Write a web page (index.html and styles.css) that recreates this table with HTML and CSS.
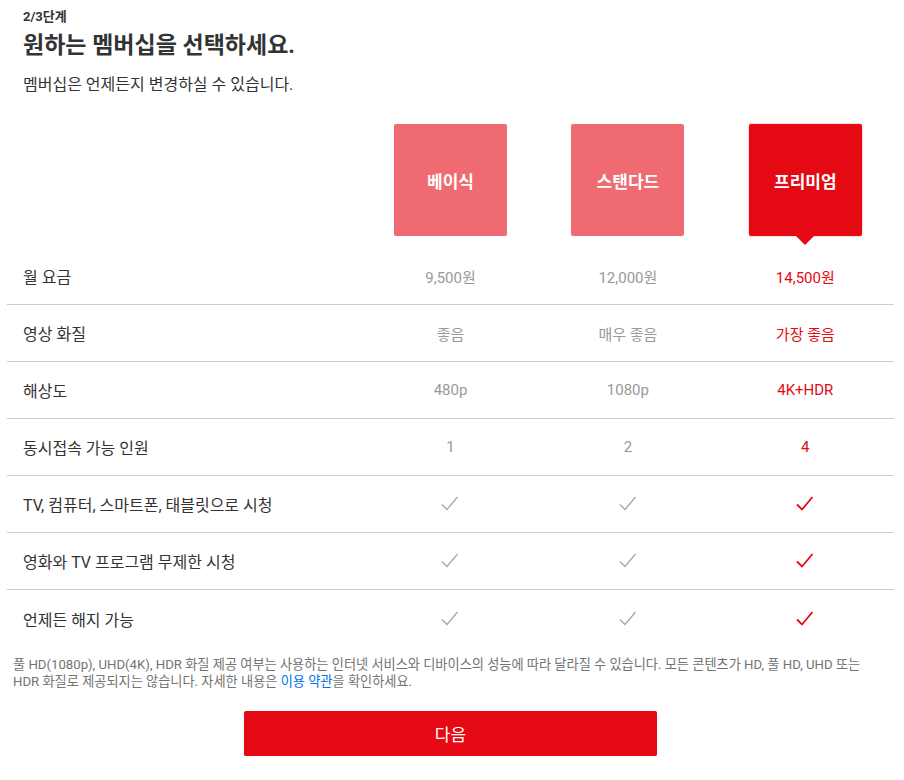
FILE: index.html
```html
<!DOCTYPE html>
<html lang="ko">
<head>
<meta charset="utf-8">
<title>멤버십 선택</title>
<link rel="stylesheet" href="styles.css">
</head>
<body>
<div class="page">
  <header class="intro">
    <div class="step">2/3단계</div>
    <h1 class="title">원하는 멤버십을 선택하세요.</h1>
    <p class="subtitle">멤버십은 언제든지 변경하실 수 있습니다.</p>
  </header>

  <div class="plans">
    <div class="plan-head">
      <div></div>
      <div class="plan-cell"><div class="plan-box">베이식</div></div>
      <div class="plan-cell"><div class="plan-box">스탠다드</div></div>
      <div class="plan-cell"><div class="plan-box selected">프리미엄</div></div>
    </div>

    <div class="row">
      <div class="label">월 요금</div>
      <div class="val">9,500원</div>
      <div class="val">12,000원</div>
      <div class="val sel">14,500원</div>
    </div>
    <div class="row">
      <div class="label">영상 화질</div>
      <div class="val">좋음</div>
      <div class="val">매우 좋음</div>
      <div class="val sel">가장 좋음</div>
    </div>
    <div class="row">
      <div class="label">해상도</div>
      <div class="val">480p</div>
      <div class="val">1080p</div>
      <div class="val sel">4K+HDR</div>
    </div>
    <div class="row">
      <div class="label">동시접속 가능 인원</div>
      <div class="val">1</div>
      <div class="val">2</div>
      <div class="val sel">4</div>
    </div>
    <div class="row">
      <div class="label">TV, 컴퓨터, 스마트폰, 태블릿으로 시청</div>
      <div class="val"><svg class="check" viewBox="0 0 18 16"><path d="M1 8.5 L6 13.5 L16.5 1"/></svg></div>
      <div class="val"><svg class="check" viewBox="0 0 18 16"><path d="M1 8.5 L6 13.5 L16.5 1"/></svg></div>
      <div class="val sel"><svg class="check" viewBox="0 0 18 16"><path d="M1 8.5 L6 13.5 L16.5 1"/></svg></div>
    </div>
    <div class="row">
      <div class="label">영화와 TV 프로그램 무제한 시청</div>
      <div class="val"><svg class="check" viewBox="0 0 18 16"><path d="M1 8.5 L6 13.5 L16.5 1"/></svg></div>
      <div class="val"><svg class="check" viewBox="0 0 18 16"><path d="M1 8.5 L6 13.5 L16.5 1"/></svg></div>
      <div class="val sel"><svg class="check" viewBox="0 0 18 16"><path d="M1 8.5 L6 13.5 L16.5 1"/></svg></div>
    </div>
    <div class="row last">
      <div class="label">언제든 해지 가능</div>
      <div class="val"><svg class="check" viewBox="0 0 18 16"><path d="M1 8.5 L6 13.5 L16.5 1"/></svg></div>
      <div class="val"><svg class="check" viewBox="0 0 18 16"><path d="M1 8.5 L6 13.5 L16.5 1"/></svg></div>
      <div class="val sel"><svg class="check" viewBox="0 0 18 16"><path d="M1 8.5 L6 13.5 L16.5 1"/></svg></div>
    </div>
  </div>

  <p class="note">풀 HD(1080p), UHD(4K), HDR 화질 제공 여부는 사용하는 인터넷 서비스와 디바이스의 성능에 따라 달라질 수 있습니다. 모든 콘텐츠가 HD, 풀 HD, UHD 또는 HDR 화질로 제공되지는 않습니다. 자세한 내용은 <a href="#" class="link">이용 약관</a>을 확인하세요.</p>

  <div class="actions">
    <button class="next" type="button">다음</button>
  </div>
</div>
</body>
</html>
```

FILE: styles.css
```css
* { box-sizing: border-box; }

html, body {
  margin: 0;
  padding: 0;
  background: #fff;
}

body {
  font-family: Roboto, "Noto Sans CJK KR", sans-serif;
  color: #333;
}

.page {
  width: 887px;
  margin-left: 7px;
}

.intro {
  padding: 9px 0 0 16px;
}

.step {
  font-size: 13px;
  font-weight: 700;
  line-height: 16px;
  color: #333;
}

.title {
  margin: 6px 0 0;
  font-size: 23px;
  font-weight: 700;
  line-height: 30px;
  color: #333;
}

.subtitle {
  margin: 14px 0 0;
  font-size: 16px;
  line-height: 20px;
  color: #333;
}

.plans {
  margin-top: 19px;
}

.plan-head,
.row {
  display: grid;
  grid-template-columns: 2fr 1fr 1fr 1fr;
}

.plan-head {
  padding-top: 10px;
  height: 134px;
}

.plan-cell {
  display: flex;
  justify-content: center;
}

.plan-box {
  position: relative;
  width: 113px;
  height: 112px;
  border-radius: 2px;
  background: #e50914;
  opacity: 0.6;
  color: #fff;
  font-size: 17px;
  font-weight: 700;
  display: flex;
  align-items: center;
  justify-content: center;
}

.plan-box.selected {
  opacity: 1;
  box-shadow: 0 0 2px rgba(229, 9, 20, 0.5);
}

.plan-box.selected::after {
  content: "";
  position: absolute;
  left: 50%;
  top: 100%;
  margin-left: -9px;
  border-style: solid;
  border-width: 9px 9px 0 9px;
  border-color: #e50914 transparent transparent transparent;
}

.row {
  height: 57px;
  border-bottom: 1px solid #ccc;
  align-items: center;
}

.row.last {
  border-bottom: none;
}

.label {
  padding-left: 16px;
  font-size: 16px;
  color: #333;
}

.val {
  text-align: center;
  font-size: 15px;
  color: #999;
  display: flex;
  justify-content: center;
  align-items: center;
}

.val.sel {
  color: #e50914;
}

.check {
  width: 18px;
  height: 16px;
  fill: none;
  stroke: #a6a6a6;
  stroke-width: 1.3;
}

.val.sel .check {
  stroke: #e50914;
  stroke-width: 1.8;
}

.note {
  margin: 9px 20px 0 6px;
  font-size: 13.2px;
  line-height: 17px;
  color: #737373;
}

.link {
  color: #0071eb;
  text-decoration: none;
}

.actions {
  display: flex;
  justify-content: center;
  margin-top: 21px;
}

.next {
  width: 413px;
  height: 45px;
  border: none;
  border-radius: 2px;
  background: #e50914;
  color: #fff;
  font-family: inherit;
  font-size: 17px;
  box-shadow: 0 1px 1px rgba(0, 0, 0, 0.25);
}
```
